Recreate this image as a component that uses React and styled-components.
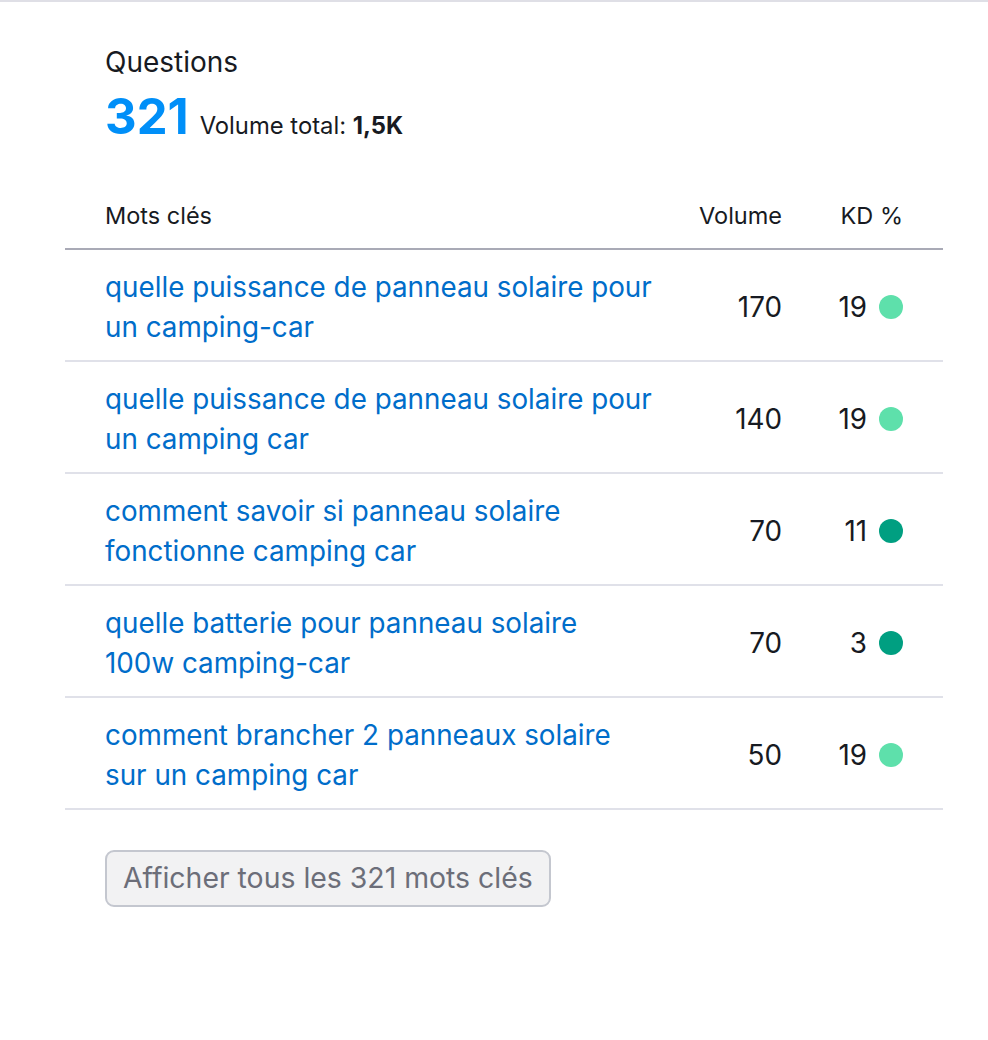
import React from "react";
import styled, { createGlobalStyle } from "styled-components";

const Global = createGlobalStyle`
  html, body { margin: 0; padding: 0; background: #ffffff; }
  body { font-family: Inter, "Noto Sans", "Liberation Sans", sans-serif; color: #171a22; }
`;

const Page = styled.div`
  border-top: 2px solid #dfdfe6;
  padding: 40px 45px 120px 65px;
  min-height: 1038px;
  box-sizing: border-box;
`;

const Panel = styled.section`
  width: 878px;
`;

const Head = styled.header`
  padding-left: 40px;
`;

const Title = styled.h2`
  margin: 0;
  font-size: 28px;
  font-weight: 400;
  line-height: 40px;
  color: #171a22;
`;

const Summary = styled.div`
  display: flex;
  align-items: baseline;
  gap: 11px;
  line-height: 56px;
  margin-top: 7px;
`;

const Big = styled.span`
  font-size: 49px;
  font-weight: 700;
  color: #008ff8;
`;

const Total = styled.span`
  font-size: 23.8px;
  color: #171a22;
  b { font-weight: 700; }
`;

const Table = styled.div`
  margin-top: 44px;
`;

const Row = styled.div`
  display: grid;
  grid-template-columns: minmax(0, 1fr) 128px 121px;
  align-items: center;
  padding: ${(p) => (p.$head ? "0 40px 14px 40px" : "17px 40px 13px 40px")};
  border-bottom: 2px solid ${(p) => (p.$head ? "#a9aab6" : "#e0e1e9")};
`;

const HeadCell = styled.div`
  font-size: 23.5px;
  line-height: 36px;
  color: #171a22;
  text-align: ${(p) => (p.$right ? "right" : "left")};
`;

const Keyword = styled.a`
  font-size: 27.8px;
  line-height: 40px;
  color: #006dca;
  text-decoration: none;
  white-space: pre-line;
`;

const Num = styled.div`
  font-size: 27.8px;
  line-height: 40px;
  text-align: right;
  color: #171a22;
`;

const Kd = styled.div`
  display: flex;
  align-items: center;
  justify-content: flex-end;
  gap: 12px;
  font-size: 27.8px;
  line-height: 40px;
`;

const Dot = styled.span`
  flex: none;
  width: 24px;
  height: 24px;
  border-radius: 50%;
  background: ${(p) => (p.$level === "easy" ? "#5ee0ab" : "#009f81")};
`;

const Footer = styled.div`
  padding: 40px 0 0 40px;
`;

const Button = styled.button`
  font-family: inherit;
  font-size: 28.4px;
  line-height: 36px;
  color: #6c6e79;
  background: #f2f2f3;
  border: 2px solid #c4c7cf;
  border-radius: 9px;
  padding: 8px 16px 9px;
  cursor: pointer;
`;

const rows = [
  { k: "quelle puissance de panneau solaire pour\nun camping-car", v: 170, kd: 19 },
  { k: "quelle puissance de panneau solaire pour\nun camping car", v: 140, kd: 19 },
  { k: "comment savoir si panneau solaire\nfonctionne camping car", v: 70, kd: 11 },
  { k: "quelle batterie pour panneau solaire\n100w camping-car", v: 70, kd: 3 },
  { k: "comment brancher 2 panneaux solaire\nsur un camping car", v: 50, kd: 19 },
];

export default function App() {
  return (
    <>
      <Global />
      <Page>
        <Panel>
          <Head>
            <Title>Questions</Title>
            <Summary>
              <Big>321</Big>
              <Total>
                Volume total: <b>1,5K</b>
              </Total>
            </Summary>
          </Head>
          <Table>
            <Row $head>
              <HeadCell>Mots clés</HeadCell>
              <HeadCell $right>Volume</HeadCell>
              <HeadCell $right>KD %</HeadCell>
            </Row>
            {rows.map((r, i) => (
              <Row key={i}>
                <Keyword href="#">{r.k}</Keyword>
                <Num>{r.v}</Num>
                <Kd>
                  {r.kd}
                  <Dot $level={r.kd >= 15 ? "easy" : "vEasy"} />
                </Kd>
              </Row>
            ))}
          </Table>
          <Footer>
            <Button>Afficher tous les 321 mots clés</Button>
          </Footer>
        </Panel>
      </Page>
    </>
  );
}
